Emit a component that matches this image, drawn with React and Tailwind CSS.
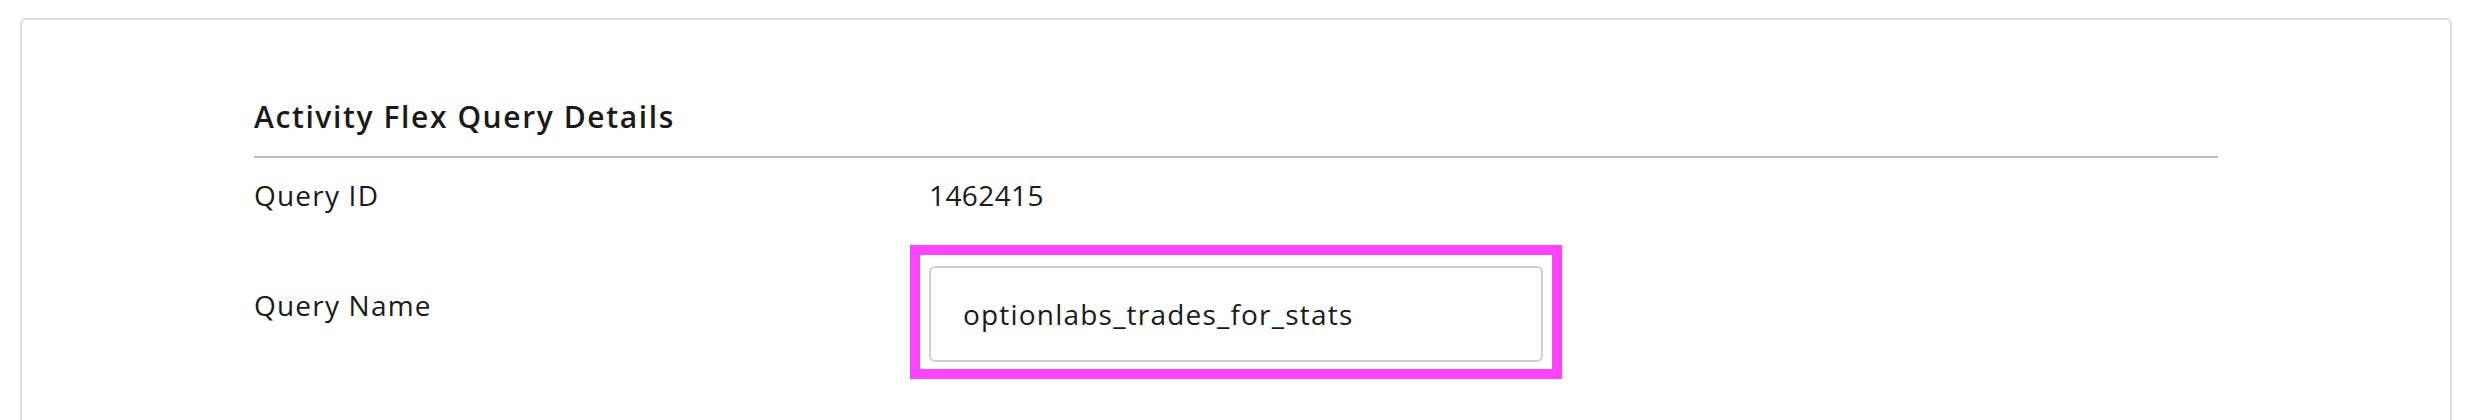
import React from "react";

export default function App() {
  return (
    <div
      className="w-full h-[420px] overflow-hidden bg-white pt-[18px] pl-[20px] pr-[24px] text-[#1a1a1a]"
      style={{ fontFamily: "'Open Sans', Lato, sans-serif" }}
    >
      <div className="h-[500px] rounded-[6px] border-2 border-[#dedede] px-[232px] pt-[79px]">
        <h2 className="text-[30px] leading-[35px] font-semibold tracking-[1.6px] pb-[22px] border-b-2 border-[#b9b9b9]">
          Activity Flex Query Details
        </h2>
        <div className="grid grid-cols-[675px_auto] mt-[20px] text-[28px] leading-[34px] tracking-[1.2px]">
          <div>Query ID</div>
          <div className="tracking-[0.4px]">1462415</div>
          <div className="pt-[43px] mt-[33px]">Query Name</div>
          <div className="mt-[33px]">
            <div className="-ml-[19px] w-[652px] border-[10px] border-[#ff44ff] pl-[9px] pr-[9px] pt-[11px] pb-[7px]">
              <div className="h-[96px] rounded-[6px] border-2 border-[#cfcfcf] pl-[32px] flex items-center">
                optionlabs_trades_for_stats
              </div>
            </div>
          </div>
        </div>
      </div>
    </div>
  );
}
